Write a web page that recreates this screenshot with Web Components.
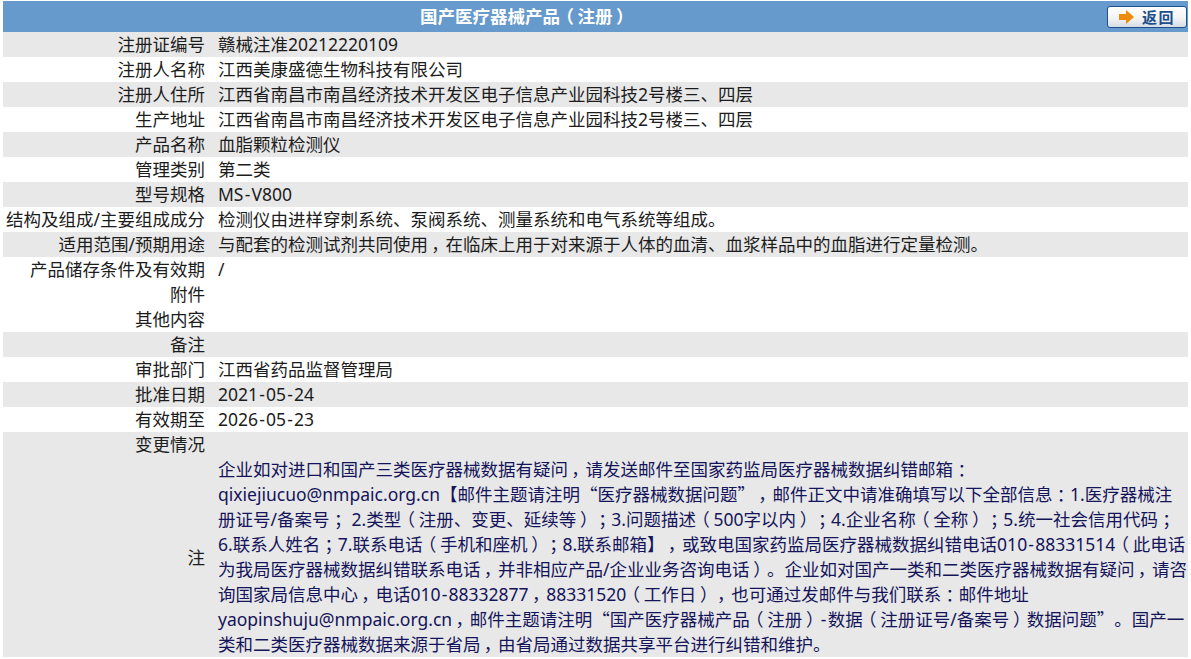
<!DOCTYPE html>
<html lang="zh-CN">
<head>
<meta charset="utf-8">
<title>国产医疗器械产品（注册）</title>
<style>
  html, body { margin: 0; padding: 0; background: #fff; }
  body { padding: 1px 3px 0; font: 17.5px/25px "Noto Sans", "Noto Sans CJK SC", sans-serif; color: #1c1c1c; text-spacing-trim: space-all; }
</style>
</head>
<body>
<detail-table>
  <title-bar slot="head">国产医疗器械产品（注册）</title-bar>
  <info-row label="注册证编号" shade>赣械注准20212220109</info-row>
  <info-row label="注册人名称">江西美康盛德生物科技有限公司</info-row>
  <info-row label="注册人住所" shade>江西省南昌市南昌经济技术开发区电子信息产业园科技2号楼三、四层</info-row>
  <info-row label="生产地址">江西省南昌市南昌经济技术开发区电子信息产业园科技2号楼三、四层</info-row>
  <info-row label="产品名称" shade>血脂颗粒检测仪</info-row>
  <info-row label="管理类别">第二类</info-row>
  <info-row label="型号规格" shade>MS-V800</info-row>
  <info-row label="结构及组成/主要组成成分">检测仪由进样穿刺系统、泵阀系统、测量系统和电气系统等组成。</info-row>
  <info-row label="适用范围/预期用途" shade>与配套的检测试剂共同使用，在临床上用于对来源于人体的血清、血浆样品中的血脂进行定量检测。</info-row>
  <info-row label="产品储存条件及有效期">/</info-row>
  <info-row label="附件"></info-row>
  <info-row label="其他内容"></info-row>
  <info-row label="备注" shade></info-row>
  <info-row label="审批部门">江西省药品监督管理局</info-row>
  <info-row label="批准日期" shade>2021-05-24</info-row>
  <info-row label="有效期至">2026-05-23</info-row>
  <info-row label="变更情况" shade></info-row>
  <info-row label="注" shade note>企业如对进口和国产三类医疗器械数据有疑问，请发送邮件至国家药监局医疗器械数据纠错邮箱：<br>qixiejiucuo@nmpaic.org.cn【邮件主题请注明“医疗器械数据问题”，邮件正文中请准确填写以下全部信息：1.医疗器械注<br>册证号/备案号； 2.类型（注册、变更、延续等）；3.问题描述（500字以内）；4.企业名称（全称）；5.统一社会信用代码；<br>6.联系人姓名；7.联系电话（手机和座机）；8.联系邮箱】，或致电国家药监局医疗器械数据纠错电话010-88331514（此电话<br>为我局医疗器械数据纠错联系电话，并非相应产品/企业业务咨询电话）。企业如对国产一类和二类医疗器械数据有疑问，请咨<br>询国家局信息中心，电话010-88332877，88331520（工作日），也可通过发邮件与我们联系：邮件地址<br>yaopinshuju@nmpaic.org.cn，邮件主题请注明“国产医疗器械产品（注册）-数据（注册证号/备案号）数据问题”。国产一<br>类和二类医疗器械数据来源于省局，由省局通过数据共享平台进行纠错和维护。</info-row>
</detail-table>

<script>
// the source font centres ，：；（） in their em box, Noto keeps them to one side
const punctStyles = `
    ::slotted(.mid) {
        display: inline-block;
        width: 1em;
        line-height: 1;
        text-align: center;
        font-family: "Noto Sans CJK SC", sans-serif;
        font-feature-settings: "palt";
    }
    ::slotted(.quote) { font-family: "Noto Sans CJK SC", sans-serif; line-height: 1; }
    ::slotted(.dash) { padding: 0 1.2px; }
`;

function wrapPunct(el) {
    el.innerHTML = el.innerHTML
        .replace(/-/g, '<span class="dash">-</span>')
        .replace(/[，：；（）]/g, '<span class="mid">$&</span>')
        .replace(/[“”]/g, '<span class="quote">$&</span>');
}

class DetailTable extends HTMLElement {
    constructor() {
        super();
        this.attachShadow({mode: "open"}).innerHTML = `
        <style>
            :host { display: block; }
            .rows { display: flex; flex-direction: column; }
        </style>
        <slot name="head"></slot>
        <div class="rows"><slot></slot></div>`;
    }
}

class TitleBar extends HTMLElement {
    constructor() {
        super();
        this.attachShadow({mode: "open"}).innerHTML = `
        <style>
            :host {
                display: grid;
                grid-template-columns: 1fr 141px;
                align-items: center;
                height: 31px;
                background: #6699cc;
                color: #fff;
                font-weight: 700;
            }
            .name { text-align: center; }
            back-button { justify-self: end; margin-right: 1px; }
            ${punctStyles}
        </style>
        <div class="name"><slot></slot></div>
        <back-button></back-button>`;
    }

    connectedCallback() {
        wrapPunct(this);
    }
}

class BackButton extends HTMLElement {
    constructor() {
        super();
        this.attachShadow({mode: "open"}).innerHTML = `
        <style>
            :host {
                display: flex;
                align-items: center;
                justify-content: center;
                gap: 8px;
                box-sizing: border-box;
                width: 80px;
                height: 22px;
                border: 1px solid #1f4f8f;
                border-radius: 3px;
                background: linear-gradient(#ffffff, #f4f4f4 55%, #d6dde6);
                color: #1c4f8c;
                font-size: 15px;
                line-height: 20px;
                font-weight: 700;
                letter-spacing: 1.5px;
            }
            svg { display: block; }
        </style>
        <svg width="15" height="14" viewBox="0 0 15 14"><path d="M0 4h7V0l8 7-8 7v-4H0z" fill="#ee8a0c"/></svg>
        <span>返回</span>`;
    }
}

class InfoRow extends HTMLElement {
    constructor() {
        super();
        this.attachShadow({mode: "open"}).innerHTML = `
        <style>
            :host {
                display: grid;
                grid-template-columns: 202px 1fr;
                column-gap: 13px;
                min-height: 25px;
            }
            :host([shade]) { background: #e8e8e8; }
            :host([note]) { color: #14145a; }
            .label { text-align: right; color: #1c1c1c; white-space: nowrap; }
            :host([note]) .label { align-self: center; }
            .value { white-space: nowrap; }
            ${punctStyles}
        </style>
        <div class="label"></div>
        <div class="value"><slot></slot></div>`;
    }

    connectedCallback() {
        this.shadowRoot.querySelector(".label").textContent = this.getAttribute("label");
        wrapPunct(this);
    }
}

customElements.define("back-button", BackButton);
customElements.define("title-bar", TitleBar);
customElements.define("info-row", InfoRow);
customElements.define("detail-table", DetailTable);
</script>
</body>
</html>
